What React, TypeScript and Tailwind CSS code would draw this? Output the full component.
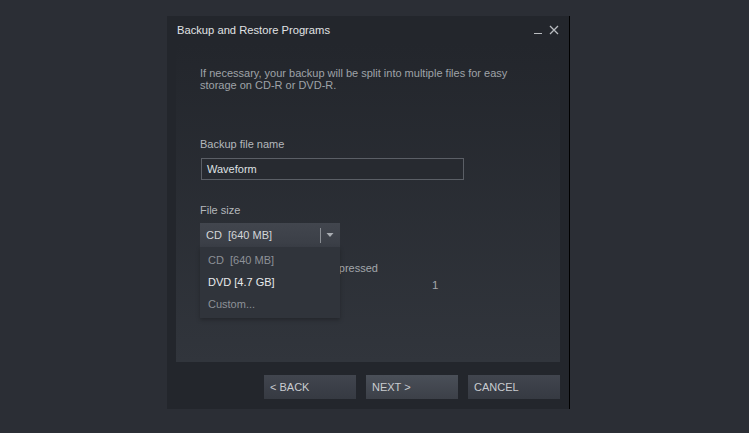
import React from 'react';

const font = { fontFamily: '"Liberation Sans", Arial, sans-serif' };

const sizes = ['CD  [640 MB]', 'DVD [4.7 GB]', 'Custom...'];

const WizardButton = ({ label, active }: { label: string; active?: boolean }) => (
  <button
    className={`w-[92px] h-[24px] px-[6px] text-left text-[11px] text-[#c9ccd0] ${
      active
        ? 'bg-gradient-to-b from-[#4a4f58] to-[#3c4048]'
        : 'bg-gradient-to-b from-[#41454e] to-[#363a42]'
    }`}
  >
    {label}
  </button>
);

const App = () => {
  return (
    <div className="min-h-screen w-full bg-[#2b2e35] pl-[167px] pt-[16px]" style={font}>
      <div className="w-[403px] h-[393px] flex flex-col bg-[#23262c] border-r border-black">
        {/* title bar */}
        <div className="h-[28px] flex items-center justify-between pl-[10px] pr-[10px]">
          <span className="text-[11.2px] text-[#e0e2e4]">Backup and Restore Programs</span>
          <div className="flex items-center gap-[7px] text-[#b9bcc0]">
            <span className="block w-[8px] h-[1.5px] bg-[#b9bcc0] mt-[7px]" />
            <svg width="10" height="10" viewBox="0 0 10 10" className="mb-[1px]">
              <path d="M1 1 L9 9 M9 1 L1 9" stroke="#b9bcc0" strokeWidth="1.3" />
            </svg>
          </div>
        </div>

        {/* content panel */}
        <div className="mx-[9px] h-[318px] bg-gradient-to-b from-[#23262c] to-[#31353c] pl-[24px] pt-[23px] relative">
          <p className="text-[11px] leading-[12px] text-[#9fa3a8]">
            If necessary, your backup will be split into multiple files for easy
            <br />
            storage on CD-R or DVD-R.
          </p>

          <div className="mt-[47px] text-[11px] leading-[12px] text-[#b4b8bc]">Backup file name</div>
          <div className="mt-[8px] ml-[1px] w-[263px] h-[22px] border border-[#5b5f66] bg-[#272a30] flex items-center px-[5px] text-[11px] text-[#dfe1e3]">
            Waveform
          </div>

          <div className="mt-[24px] text-[11px] leading-[12px] text-[#b4b8bc]">File size</div>
          <div className="relative mt-[7px] w-[140px]">
            <div className="h-[24px] flex items-center bg-gradient-to-b from-[#42464e] to-[#3a3e46] text-[11px] text-[#d3d6d9]">
              <span className="flex-1 pl-[6px] whitespace-pre">CD  [640 MB]</span>
              <span className="w-px h-[15px] bg-[#8a8e94]" />
              <svg width="19" height="8" viewBox="0 0 19 8">
                <path d="M5.5 2 L12.5 2 L9 6 Z" fill="#a9adb2" />
              </svg>
            </div>
            <div className="absolute left-0 top-[24px] z-10 w-[140px] bg-[#30343b] pt-[2px] pb-[3px] shadow-[0_2px_4px_rgba(0,0,0,0.25)]">
              {sizes.map((s, i) => (
                <div
                  key={s}
                  className={`h-[22px] flex items-center pl-[8px] text-[11px] whitespace-pre ${
                    i === 1 ? 'text-[#e8eaec]' : 'text-[#8d9197]'
                  }`}
                >
                  {s}
                </div>
              ))}
            </div>
          </div>

          {/* row partly hidden behind the open menu */}
          <div className="mt-[15px] pl-[104px] text-[11px] leading-[12px] text-[#a3a7ac]">Uncompressed</div>
          <div className="mt-[5px] pl-[232px] text-[11.5px] leading-[12px] text-[#a3a7ac]">1</div>
        </div>

        {/* buttons */}
        <div className="mt-[13px] pr-[9px] flex justify-end gap-[10px]">
          <WizardButton label="< BACK" />
          <WizardButton label="NEXT >" active />
          <WizardButton label="CANCEL" />
        </div>
      </div>
    </div>
  );
};

export default App;
